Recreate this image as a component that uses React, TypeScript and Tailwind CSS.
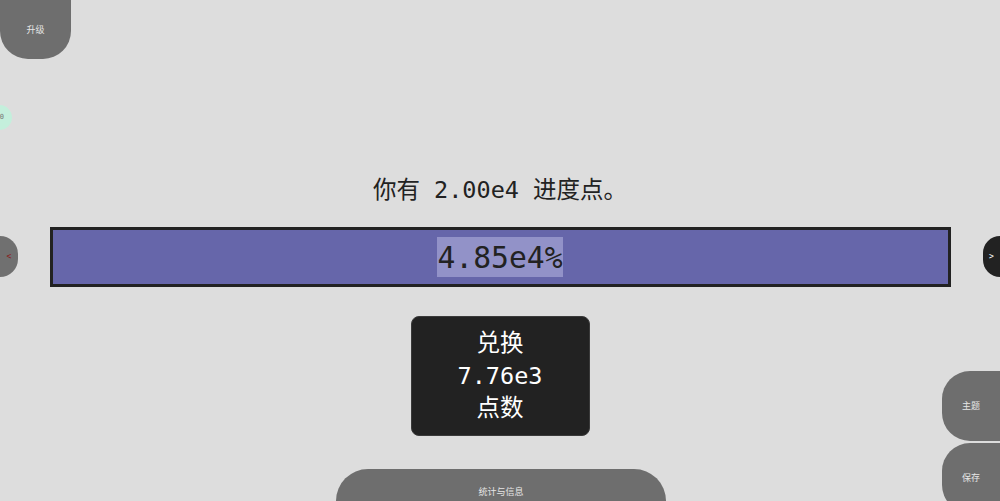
import React from "react";

const mono = "font-['DejaVu_Sans_Mono','Noto_Sans_CJK_SC',monospace]";
const small = "font-['Noto_Sans_CJK_SC',sans-serif] text-[9px] text-[#e6e6e6]";

const App = () => {
  const points = "2.00e4";
  const progress = "4.85e4%";
  const gain = "7.76e3";

  return (
    <div className={`relative h-[501px] w-[1000px] overflow-hidden bg-[#dddddd] text-[#222] ${mono}`}>
      <div className="flex flex-col items-center pt-[173px]">
        <p className="text-[23.5px] leading-[34px]">你有 {points} 进度点。</p>
        <div className="mt-[20px] flex h-[60px] w-[901px] items-center justify-center border-[3px] border-[#222] bg-[#6666aa]">
          <span className="bg-[#9292c8] py-[2.5px] text-[29.7px] leading-[35px] text-[#222]">
            {progress}
          </span>
        </div>
        <button className="mt-[29px] flex h-[120px] w-[179px] flex-col items-center justify-center rounded-[8px] border border-[#3a3a3a] bg-[#222] text-[23.5px] leading-[32.5px] text-white">
          <span>兑换</span>
          <span>{gain}</span>
          <span>点数</span>
        </button>
      </div>

      {/* top left */}
      <button className={`absolute left-0 top-0 flex h-[59px] w-[71px] items-center justify-center rounded-b-[28px] bg-[#6e6e6e] ${small}`}>
        升级
      </button>
      <div className="absolute left-[-13px] top-[105px] flex h-[25px] w-[25px] items-center justify-end rounded-full bg-[#c4efdc] pr-[8px] text-[7px] text-[#777]">
        0
      </div>

      {/* side arrows */}
      <button className="absolute left-0 top-[236px] flex h-[41px] w-[18px] items-center justify-center rounded-r-full bg-[#707070] text-[8px] text-[#8a1c1c]">
        &lt;
      </button>
      <button className="absolute right-0 top-[236px] flex h-[41px] w-[17px] items-center justify-center rounded-l-full bg-[#222] text-[8px] text-white">
        &gt;
      </button>

      {/* bottom */}
      <button className={`absolute bottom-[-20px] left-[336px] flex h-[52px] w-[330px] items-start justify-center rounded-t-[32px] bg-[#6e6e6e] pt-[16px] ${small}`}>
        统计与信息
      </button>
      <div className="absolute bottom-[-12px] right-0 flex flex-col gap-[2px]">
        <button className={`flex h-[70px] w-[58px] items-center justify-center rounded-l-[28px] bg-[#6e6e6e] ${small}`}>
          主题
        </button>
        <button className={`flex h-[70px] w-[58px] items-center justify-center rounded-l-[28px] bg-[#6e6e6e] ${small}`}>
          保存
        </button>
      </div>
    </div>
  );
};

export default App;
